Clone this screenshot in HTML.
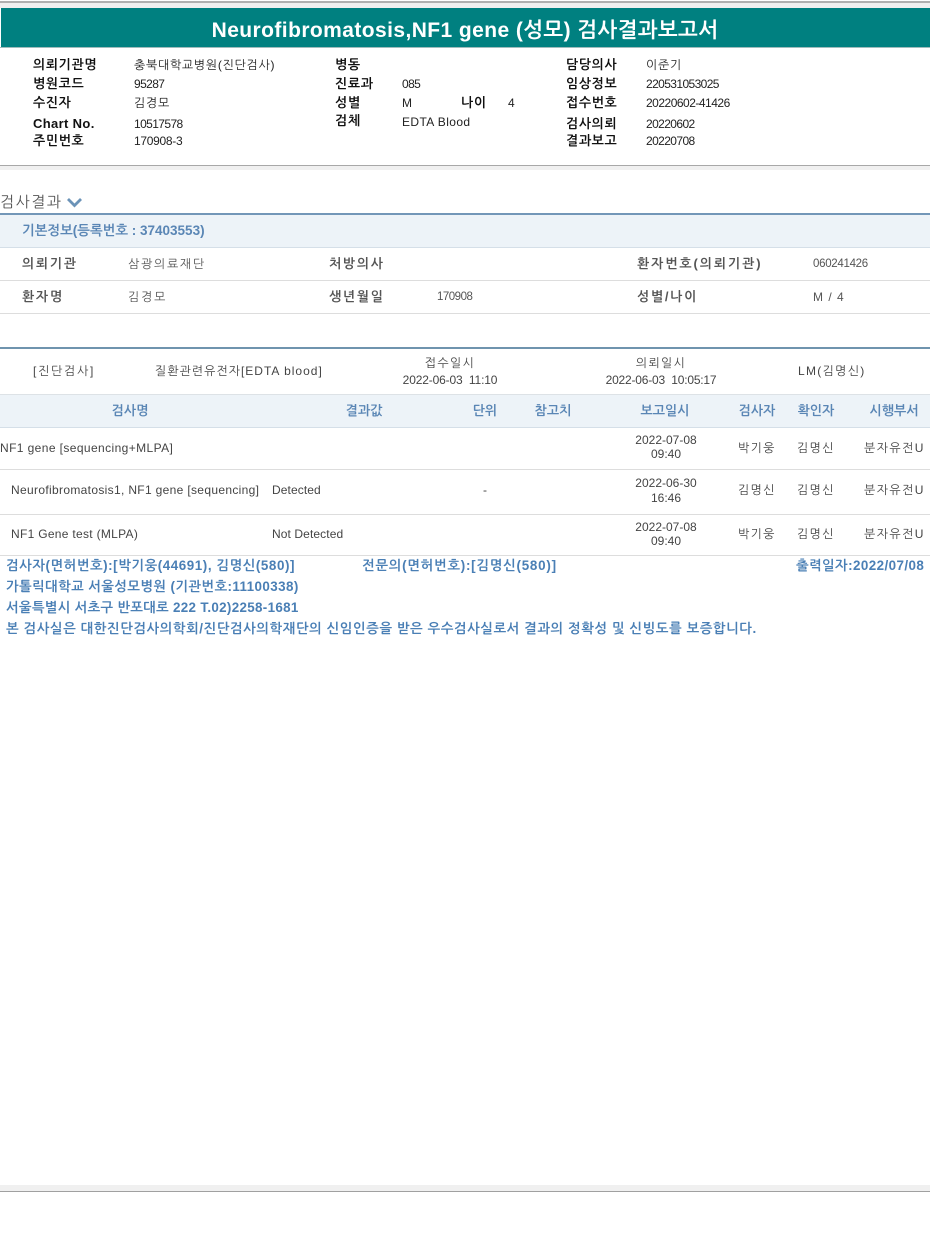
<!DOCTYPE html>
<html lang="ko">
<head>
<meta charset="utf-8">
<title>Neurofibromatosis,NF1 gene 검사결과보고서</title>
<style>
html,body{margin:0;padding:0;background:#fff;}
#p{position:relative;width:930px;height:1240px;overflow:hidden;background:#fff;font-family:"Liberation Sans","NanumGothic","Noto Sans CJK KR",sans-serif;font-size:12px;color:#333;}
.b{position:absolute;left:0;width:930px;}
.t{position:absolute;white-space:nowrap;line-height:16px;height:16px;}
.k{font-weight:bold;color:#111;font-size:13px;letter-spacing:.6px;}
.v{color:#222;font-size:12px;letter-spacing:.7px;}
.n{color:#222;font-size:12px;letter-spacing:-.6px;}
.l{font-weight:bold;color:#555;font-size:13px;letter-spacing:1.7px;}
.h{font-weight:bold;color:#5a86b5;font-size:13px;text-align:center;}
.c{text-align:center;}
.d{color:#444;letter-spacing:1.3px;}
.f{font-weight:bold;color:#4a7fb5;font-size:13.4px;letter-spacing:.57px;}
</style>
</head>
<body>
<div id="p">
<div class="b" style="top:1px;height:2px;background:#b0b0b0"></div>
<div class="b" style="top:3px;height:5px;background:#f0f0f0"></div>
<div class="b" style="top:8px;left:1px;width:929px;height:39px;background:#008080"></div>
<div class="b" style="top:47px;height:1px;background:#9fbcbc"></div>
<div class="t" style="left:0;width:930px;top:16px;height:26px;line-height:26px;text-align:center;color:#fff;font-size:21px;font-weight:bold;letter-spacing:.42px;padding-top:2px">Neurofibromatosis,NF1 gene (성모) 검사결과보고서</div>

<span class="t k" style="left:33px;top:57px">의뢰기관명</span><span class="t v" style="left:134px;top:57px">충북대학교병원(진단검사)</span>
<span class="t k" style="left:33px;top:76px">병원코드</span><span class="t n" style="left:134px;top:76px">95287</span>
<span class="t k" style="left:33px;top:95px">수진자</span><span class="t v" style="left:134px;top:95px">김경모</span>
<span class="t k" style="left:33px;top:116px;letter-spacing:.35px">Chart No.</span><span class="t n" style="left:134px;top:116px">10517578</span>
<span class="t k" style="left:33px;top:133px">주민번호</span><span class="t n" style="left:134px;top:133px;letter-spacing:-.3px">170908-3</span>

<span class="t k" style="left:335px;top:57px">병동</span>
<span class="t k" style="left:335px;top:76px">진료과</span><span class="t n" style="left:402px;top:76px">085</span>
<span class="t k" style="left:335px;top:95px">성별</span><span class="t n" style="left:402px;top:95px">M</span>
<span class="t k" style="left:461px;top:95px">나이</span><span class="t n" style="left:508px;top:95px">4</span>
<span class="t k" style="left:335px;top:113px">검체</span><span class="t v" style="left:402px;top:114px;letter-spacing:.4px">EDTA Blood</span>

<span class="t k" style="left:566px;top:57px">담당의사</span><span class="t v" style="left:646px;top:57px">이준기</span>
<span class="t k" style="left:566px;top:76px">임상정보</span><span class="t n" style="left:646px;top:76px">220531053025</span>
<span class="t k" style="left:566px;top:95px">접수번호</span><span class="t n" style="left:646px;top:95px;letter-spacing:-.5px">20220602-41426</span>
<span class="t k" style="left:566px;top:116px">검사의뢰</span><span class="t n" style="left:646px;top:116px">20220602</span>
<span class="t k" style="left:566px;top:133px">결과보고</span><span class="t n" style="left:646px;top:133px">20220708</span>

<div class="b" style="top:165px;height:1px;background:#a8a8a8"></div>
<div class="b" style="top:166px;height:4px;background:#f0f0f0"></div>

<span class="t" style="left:0;top:195px;font-size:15px;color:#555;letter-spacing:1.5px;">검사결과</span>
<svg style="position:absolute;left:66px;top:197px" width="17" height="11" viewBox="0 0 17 11"><path d="M2 2 L8.5 8.5 L15 2" fill="none" stroke="#6b93b8" stroke-width="2.8"/></svg>

<div class="b" style="top:213px;height:2px;background:#7397b8"></div>
<div class="b" style="top:215px;height:32px;background:#edf3f8"></div>
<div class="b" style="top:247px;height:1px;background:#d5dfe8"></div>
<span class="t" style="left:22px;top:223px;font-size:13.5px;font-weight:bold;color:#5a86b5">기본정보(등록번호 : 37403553)</span>

<span class="t l" style="left:22px;top:256px">의뢰기관</span><span class="t" style="left:128px;top:256px;letter-spacing:1.7px;color:#555">삼광의료재단</span>
<span class="t l" style="left:329px;top:256px">처방의사</span>
<span class="t l" style="left:637px;top:256px;letter-spacing:1.9px">환자번호(의뢰기관)</span><span class="t" style="left:813px;top:256px;color:#555;font-size:11.5px;letter-spacing:-.3px">060241426</span>
<div class="b" style="top:280px;height:1px;background:#ddd"></div>
<span class="t l" style="left:22px;top:289px">환자명</span><span class="t" style="left:128px;top:289px;letter-spacing:1.8px;color:#555">김경모</span>
<span class="t l" style="left:329px;top:289px">생년월일</span><span class="t" style="left:437px;top:289px;color:#555;font-size:11.5px;letter-spacing:-.5px">170908</span>
<span class="t l" style="left:637px;top:289px">성별/나이</span><span class="t" style="left:813px;top:289px;color:#555;letter-spacing:1px">M / 4</span>
<div class="b" style="top:313px;height:1px;background:#ddd"></div>

<div class="b" style="top:347px;height:2px;background:#6f94ae"></div>
<span class="t" style="left:33px;top:363px;color:#444;letter-spacing:1.7px">[진단검사]</span>
<span class="t" style="left:155px;top:363px;color:#444;letter-spacing:1px">질환관련유전자[EDTA blood]</span>
<span class="t c" style="left:350px;width:200px;top:355px;color:#444;letter-spacing:1.3px">접수일시</span>
<span class="t c" style="left:350px;width:200px;top:372px;color:#444;letter-spacing:-.15px">2022-06-03&nbsp; 11:10</span>
<span class="t c" style="left:561px;width:200px;top:355px;color:#444;letter-spacing:1.3px">의뢰일시</span>
<span class="t c" style="left:561px;width:200px;top:372px;color:#444;letter-spacing:-.2px">2022-06-03&nbsp; 10:05:17</span>
<span class="t" style="left:798px;top:363px;color:#444;letter-spacing:1.3px">LM(김명신)</span>

<div class="b" style="top:394px;height:1px;background:#dde2e6"></div>
<div class="b" style="top:395px;height:32px;background:#edf3f8"></div>
<div class="b" style="top:427px;height:1px;background:#d5dfe8"></div>
<span class="t h" style="left:80px;width:100px;top:403px">검사명</span>
<span class="t h" style="left:314px;width:100px;top:403px">결과값</span>
<span class="t h" style="left:435px;width:100px;top:403px">단위</span>
<span class="t h" style="left:503px;width:100px;top:403px">참고치</span>
<span class="t h" style="left:615px;width:100px;top:403px">보고일시</span>
<span class="t h" style="left:707px;width:100px;top:403px">검사자</span>
<span class="t h" style="left:766px;width:100px;top:403px">확인자</span>
<span class="t h" style="left:844px;width:100px;top:403px">시행부서</span>

<span class="t" style="left:0;top:440px;color:#444;letter-spacing:.4px">NF1 gene [sequencing+MLPA]</span>
<span class="t c" style="left:616px;width:100px;top:432px;color:#444">2022-07-08</span>
<span class="t c" style="left:616px;width:100px;top:446px;color:#444">09:40</span>
<span class="t d" style="left:738px;top:440px">박기웅</span>
<span class="t d" style="left:797px;top:440px">김명신</span>
<span class="t" style="left:864px;top:440px;color:#444;letter-spacing:1.4px">분자유전U</span>
<div class="b" style="top:469px;height:1px;background:#ddd"></div>

<span class="t" style="left:11px;top:482px;color:#444;letter-spacing:.33px">Neurofibromatosis1, NF1 gene [sequencing]</span>
<span class="t" style="left:272px;top:482px;color:#444;letter-spacing:.1px">Detected</span>
<span class="t" style="left:483px;top:482px;color:#444">-</span>
<span class="t c" style="left:616px;width:100px;top:475px;color:#444">2022-06-30</span>
<span class="t c" style="left:616px;width:100px;top:490px;color:#444">16:46</span>
<span class="t d" style="left:738px;top:482px">김명신</span>
<span class="t d" style="left:797px;top:482px">김명신</span>
<span class="t" style="left:864px;top:482px;color:#444;letter-spacing:1.4px">분자유전U</span>
<div class="b" style="top:514px;height:1px;background:#ddd"></div>

<span class="t" style="left:11px;top:526px;color:#444;letter-spacing:.3px">NF1 Gene test (MLPA)</span>
<span class="t" style="left:272px;top:526px;color:#444;letter-spacing:.1px">Not Detected</span>
<span class="t c" style="left:616px;width:100px;top:519px;color:#444">2022-07-08</span>
<span class="t c" style="left:616px;width:100px;top:533px;color:#444">09:40</span>
<span class="t d" style="left:738px;top:526px">박기웅</span>
<span class="t d" style="left:797px;top:526px">김명신</span>
<span class="t" style="left:864px;top:526px;color:#444;letter-spacing:1.4px">분자유전U</span>
<div class="b" style="top:555px;height:1px;background:#ddd"></div>

<span class="t f" style="left:6px;top:558px">검사자(면허번호):[박기웅(44691), 김명신(580)]</span>
<span class="t f" style="left:362px;top:558px;letter-spacing:.77px">전문의(면허번호):[김명신(580)]</span>
<span class="t f" style="left:796px;top:558px;letter-spacing:.43px">출력일자:2022/07/08</span>
<span class="t f" style="left:6px;top:579px;letter-spacing:.43px">가톨릭대학교 서울성모병원 (기관번호:11100338)</span>
<span class="t f" style="left:6px;top:600px;letter-spacing:.32px">서울특별시 서초구 반포대로 222 T.02)2258-1681</span>
<span class="t f" style="left:6px;top:621px;letter-spacing:.6px">본 검사실은 대한진단검사의학회/진단검사의학재단의 신임인증을 받은 우수검사실로서 결과의 정확성 및 신빙도를 보증합니다.</span>

<div class="b" style="top:1185px;height:6px;background:#f0f0f0"></div>
<div class="b" style="top:1191px;height:1px;background:#a0a0a0"></div>
</div>
</body>
</html>
